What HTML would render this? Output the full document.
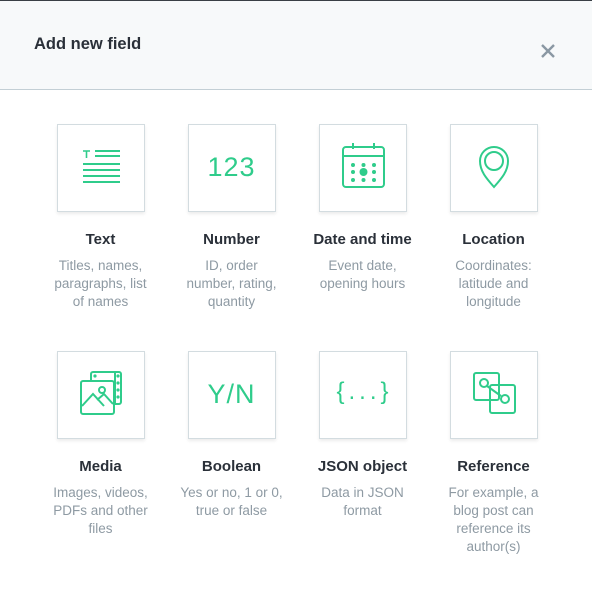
<!DOCTYPE html>
<html><head><meta charset="utf-8"><style>
*{margin:0;padding:0;box-sizing:border-box}
body{width:592px;height:615px;background:#fff;font-family:"Liberation Sans",sans-serif;position:relative;overflow:hidden}
.hdr{position:absolute;left:0;top:0;width:592px;height:90px;background:#f7f9fa;border-bottom:1px solid #c3cfd5;border-top:1px solid #3a3f45}
.hdr h1{position:absolute;left:34px;top:34px;font-size:16.5px;font-weight:bold;color:#2a3039}
.x{position:absolute;left:540px;top:42px}
.item{position:absolute;width:131px;text-align:center}
.tile{width:88px;height:88px;margin:0 auto;border:1px solid #d3dce0;box-shadow:0 2px 3px rgba(0,0,0,.08);background:#fff;position:relative}
.tile svg{position:absolute;left:-1px;top:-1px}
.t{margin-top:19px;font-size:15px;font-weight:bold;color:#2a3039;line-height:18px}
.d{margin:8px auto 0;width:104px;font-size:13.5px;color:#8e9aa3;line-height:18px}
.g{stroke:#2fcc8b;fill:none;stroke-width:2}
.num{position:absolute;left:0;right:0;top:27px;font-size:27px;color:#2fcc8b;text-align:center;letter-spacing:1px}
</style></head><body>
<div class="hdr"><h1>Add new field</h1>
<svg class="x" width="16" height="16" viewBox="0 0 16 16"><path d="M2 2L14 14M14 2L2 14" stroke="#8a98a3" stroke-width="2.4"/></svg></div>

<div class="item" style="left:35px;top:124px"><div class="tile"><svg width="88" height="88">
<path d="M26 27h7M29.5 27v7" stroke="#2fcc8b" stroke-width="1.6"/>
<path d="M38 27h25M38 32h25M26 40h37M26 46h37M26 52h37M26 58h37" stroke="#2fcc8b" stroke-width="2"/></svg></div>
<div class="t">Text</div><div class="d">Titles, names, paragraphs, list of names</div></div>

<div class="item" style="left:166px;top:124px"><div class="tile"><div class="num">123</div></div>
<div class="t">Number</div><div class="d">ID, order number, rating, quantity</div></div>

<div class="item" style="left:297px;top:124px"><div class="tile"><svg width="88" height="88">
<rect x="24" y="23" width="41" height="40" rx="3" class="g"/><path d="M24 32h41M34 19v6M55 19v6" class="g"/>
<g fill="#2fcc8b"><circle cx="34" cy="41" r="2"/><circle cx="44.5" cy="41" r="2"/><circle cx="55" cy="41" r="2"/><circle cx="34" cy="48" r="2"/><circle cx="44.5" cy="48" r="4"/><circle cx="55" cy="48" r="2"/><circle cx="34" cy="56" r="2"/><circle cx="44.5" cy="56" r="2"/><circle cx="55" cy="56" r="2"/></g></svg></div>
<div class="t">Date and time</div><div class="d">Event date, opening hours</div></div>

<div class="item" style="left:428px;top:124px"><div class="tile"><svg width="88" height="88">
<path d="M44 63C36 54 30 47 30 37a14 14 0 0 1 28 0c0 10-6 17-14 26z" class="g"/><circle cx="44" cy="37" r="9" class="g"/></svg></div>
<div class="t">Location</div><div class="d">Coordinates: latitude and longitude</div></div>

<div class="item" style="left:35px;top:351px"><div class="tile"><svg width="88" height="88">
<path d="M34 29v-6a2 2 0 0 1 2-2h26a2 2 0 0 1 2 2v28a2 2 0 0 1-2 2h-5" class="g"/>
<path d="M58 21v32" class="g" stroke-width="1.5"/>
<g fill="#2fcc8b"><circle cx="38" cy="25" r="1.6"/><circle cx="61" cy="25" r="1.6"/><circle cx="61" cy="32" r="1.6"/><circle cx="61" cy="39" r="1.6"/><circle cx="61" cy="46" r="1.6"/></g>
<rect x="24" y="30" width="33" height="33" rx="2" class="g"/>
<circle cx="45" cy="39" r="3" class="g"/>
<path d="M25 55l11-12 11 12M40 49l7-6 9 10" class="g"/></svg></div>
<div class="t">Media</div><div class="d">Images, videos, PDFs and other files</div></div>

<div class="item" style="left:166px;top:351px"><div class="tile"><div class="num">Y/N</div></div>
<div class="t">Boolean</div><div class="d">Yes or no, 1 or 0, true or false</div></div>

<div class="item" style="left:297px;top:351px"><div class="tile"><div class="num" style="font-size:24px;top:26px;letter-spacing:4px;padding-left:4px">{...}</div></div>
<div class="t">JSON object</div><div class="d">Data in JSON format</div></div>

<div class="item" style="left:428px;top:351px"><div class="tile"><svg width="88" height="88">
<rect x="24" y="22" width="25" height="27" rx="2" class="g"/><rect x="40" y="34" width="25" height="28" rx="2" class="g" fill="#fff"/>
<circle cx="34" cy="32" r="4" class="g" fill="#fff"/><circle cx="55" cy="48" r="4" class="g"/><path d="M37 35l14 10" class="g"/></svg></div>
<div class="t">Reference</div><div class="d">For example, a blog post can reference its author(s)</div></div>
</body></html>
